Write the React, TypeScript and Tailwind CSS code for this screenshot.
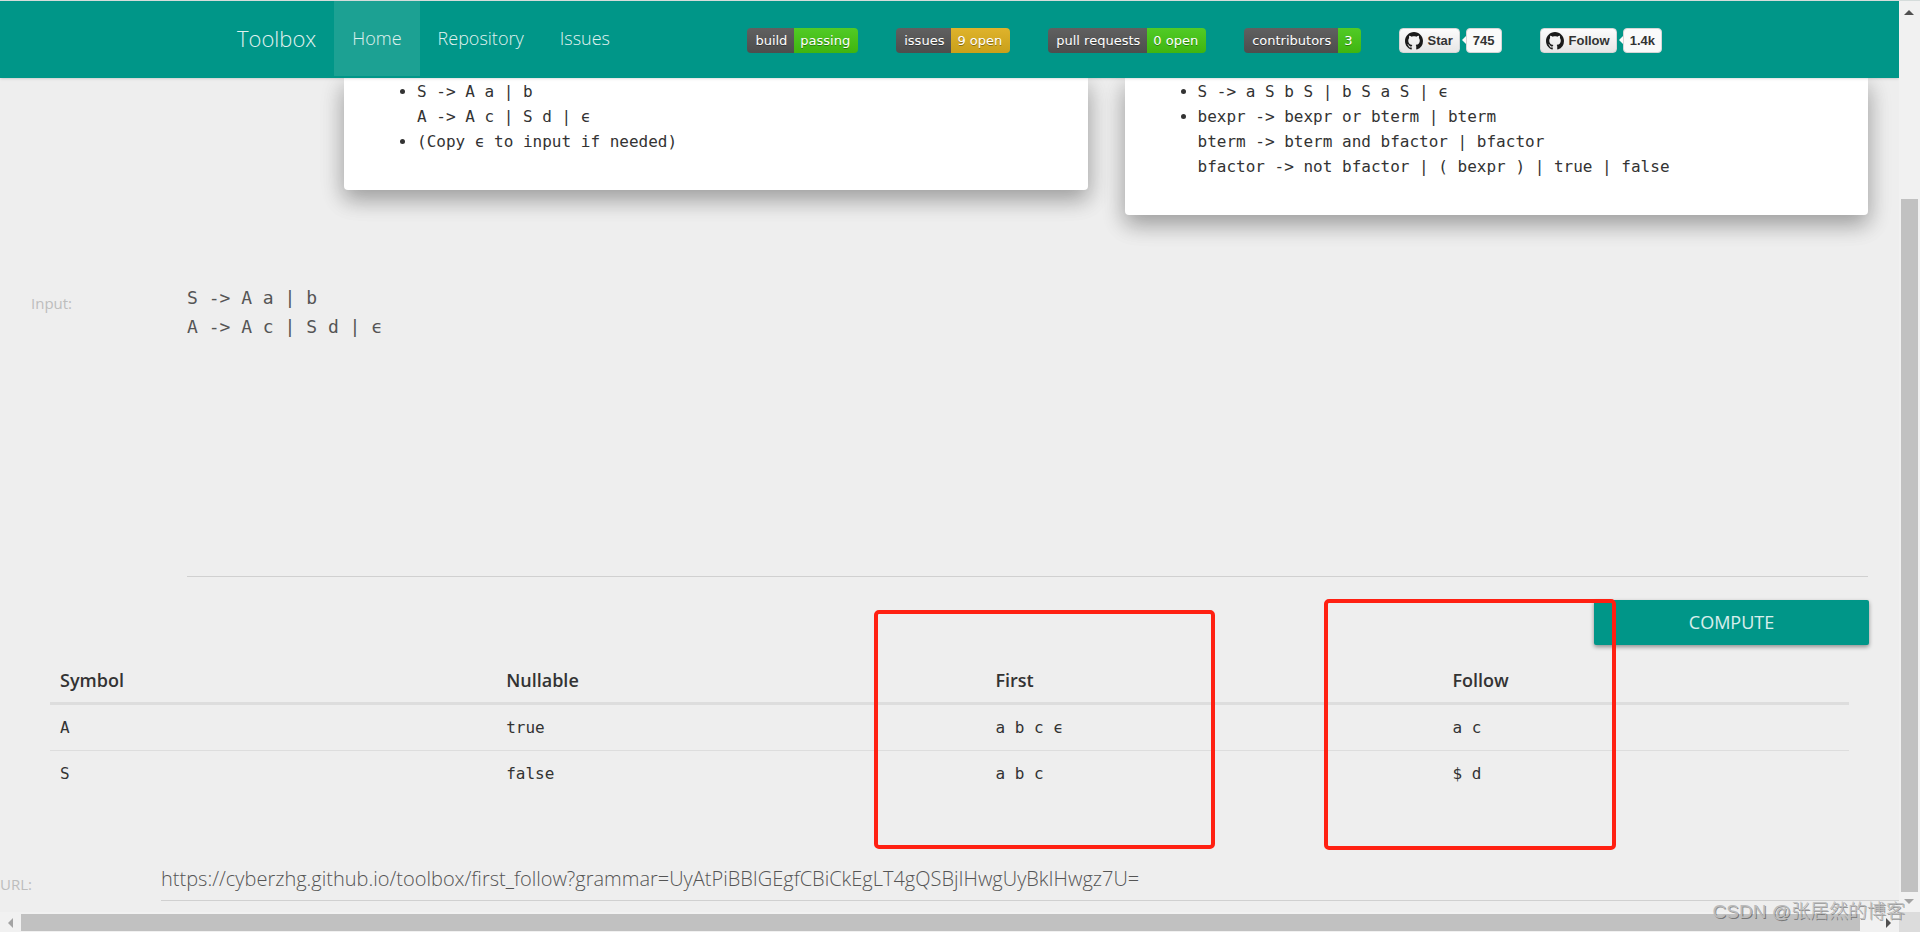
const navLinks = [
  { label: "Home", active: true },
  { label: "Repository", active: false },
  { label: "Issues", active: false },
];

const badges = [
  { label: "build", value: "passing", color: "from-[#51cb25] to-[#3fb50f]" },
  { label: "issues", value: "9 open", color: "from-[#dfb32b] to-[#c9a01a]" },
  { label: "pull requests", value: "0 open", color: "from-[#51cb25] to-[#3fb50f]" },
  { label: "contributors", value: "3", color: "from-[#51cb25] to-[#3fb50f]" },
];

const socials = [
  { label: "Star", count: "745" },
  { label: "Follow", count: "1.4k" },
];

const rows = [
  { symbol: "A", nullable: "true", first: "a b c ϵ", follow: "a c" },
  { symbol: "S", nullable: "false", first: "a b c", follow: "$ d" },
];

const mono = "font-['DejaVu_Sans_Mono',monospace]";

function Navbar() {
  return (
    <header className="relative z-10 h-[78px] border-t border-[#d5dcdb] bg-[#009688] shadow-sm">
      <div className="mx-auto flex max-w-[1425px] items-start justify-between">
        <nav className="flex items-center font-light text-[#e0f2f0]">
          <a href="#" className="mr-[18px] text-[22px] leading-[75px]">Toolbox</a>
          {navLinks.map((link) => (
            <a
              key={link.label}
              href="#"
              className={`px-[18px] text-[18px] leading-[75px] ${link.active ? "bg-[#1ca193]" : ""}`}
            >
              {link.label}
            </a>
          ))}
        </nav>
        <div className="flex gap-[38px] pt-[27px]">
          {badges.map((badge) => (
            <Badge key={badge.label} {...badge} />
          ))}
          {socials.map((social) => (
            <SocialBadge key={social.label} {...social} />
          ))}
        </div>
      </div>
    </header>
  );
}

function Badge({ label, value, color }: { label: string; value: string; color: string }) {
  return (
    <a
      href="#"
      className="flex h-[25px] overflow-hidden rounded font-['DejaVu_Sans',sans-serif] text-[13px] leading-[25px] whitespace-nowrap text-white [text-shadow:0_1px_0_rgba(1,1,1,0.35)]"
    >
      <span className="bg-linear-to-b from-[#606060] to-[#4d4d4d] pr-[7px] pl-2">{label}</span>
      <span className={`bg-linear-to-b pr-2 pl-1.5 ${color}`}>{value}</span>
    </a>
  );
}

function GithubMark() {
  return (
    <svg className="size-[18px] text-[#1b1b1b]" viewBox="0 0 16 16" fill="currentColor">
      <path d="M8 0C3.58 0 0 3.58 0 8c0 3.54 2.29 6.53 5.47 7.59.4.07.55-.17.55-.38 0-.19-.01-.82-.01-1.49-2.01.37-2.53-.49-2.69-.94-.09-.23-.48-.94-.82-1.13-.28-.15-.68-.52-.01-.53.63-.01 1.08.58 1.23.82.72 1.21 1.87.87 2.33.66.07-.52.28-.87.51-1.07-1.78-.2-3.64-.89-3.64-3.95 0-.87.31-1.59.82-2.15-.08-.2-.36-1.02.08-2.12 0 0 .67-.21 2.2.82.64-.18 1.32-.27 2-.27s1.36.09 2 .27c1.53-1.04 2.2-.82 2.2-.82.44 1.1.16 1.92.08 2.12.51.56.82 1.27.82 2.15 0 3.07-1.87 3.75-3.65 3.95.29.25.54.73.54 1.48 0 1.07-.01 1.93-.01 2.2 0 .21.15.46.55.38A8.01 8.01 0 0 0 16 8c0-4.42-3.58-8-8-8z" />
    </svg>
  );
}

function SocialBadge({ label, count }: { label: string; count: string }) {
  return (
    <a
      href="#"
      className="flex h-[25px] font-['Liberation_Sans',sans-serif] text-[13px] leading-[23px] font-bold whitespace-nowrap text-[#333]"
    >
      <span className="flex items-center gap-[5px] rounded-sm border border-[#d5d5d5] bg-linear-to-b from-[#fcfcfc] to-[#e6e6e6] pr-1.5 pl-[5px]">
        <GithubMark />
        {label}
      </span>
      <svg className="mt-2 h-2 w-1.5" viewBox="0 0 6 8">
        <path d="M6 0v8L2 4z" fill="#fafafa" />
      </svg>
      <span className="rounded-sm border border-[#d5d5d5] bg-[#fafafa] px-1.5">{count}</span>
    </a>
  );
}

function ExampleCard({ items }: { items: string[] }) {
  return (
    <div className="rounded-b-sm bg-white pt-px pb-9 pl-[73px] shadow-[0_10px_21px_rgba(0,0,0,0.2),0_8px_25px_rgba(0,0,0,0.19)]">
      <ul className={`list-disc text-[16px] leading-[25px] whitespace-pre ${mono}`}>
        {items.map((item) => (
          <li key={item}>{item}</li>
        ))}
      </ul>
    </div>
  );
}

function Arrow({ d, color }: { d: string; color: string }) {
  return (
    <svg className="size-5 shrink-0" viewBox="0 0 20 20">
      <path d={d} fill={color} />
    </svg>
  );
}

export default function App() {
  return (
    <div className="relative grid h-screen grid-cols-[minmax(0,1fr)_21px] grid-rows-[minmax(0,1fr)_20px] overflow-hidden bg-[#eee] font-['Open_Sans',sans-serif] text-[#333]">
      <div className="overflow-hidden">
        <Navbar />

        <section className="grid grid-cols-2 items-start gap-[37px] pr-[31px] pl-[344px]">
          <ExampleCard items={["S -> A a | b\nA -> A c | S d | ϵ", "(Copy ϵ to input if needed)"]} />
          <ExampleCard
            items={[
              "S -> a S b S | b S a S | ϵ",
              "bexpr -> bexpr or bterm | bterm\nbterm -> bterm and bfactor | bfactor\nbfactor -> not bfactor | ( bexpr ) | true | false",
            ]}
          />
        </section>

        <section className="mt-[68px] flex items-start pr-[31px]">
          <label htmlFor="grammar" className="w-[187px] shrink-0 pt-[10px] pl-[31px] text-[15px] leading-5 text-[#bdbdbd]">
            Input:
          </label>
          <textarea
            id="grammar"
            className={`h-[294px] flex-1 resize-none border-b border-[#d0d0d0] text-[18px] leading-[29px] text-[#555] outline-none ${mono}`}
            defaultValue={"S -> A a | b\nA -> A c | S d | ϵ"}
          />
        </section>

        <div className="mt-[23px] flex justify-end pr-[30px]">
          <button className="h-[45px] w-[275px] rounded-xs bg-[#009688] text-[18px] text-white/85 shadow-[0_2px_4px_rgba(0,0,0,0.4)]">
            COMPUTE
          </button>
        </div>

        <div className="mt-[13px] px-[50px]">
          <table className="w-full table-fixed border-separate border-spacing-0 text-left">
            <thead className="text-[18px] leading-6">
              <tr className="*:h-[47px] *:border-b-3 *:border-[#ddd] *:pl-[10px] *:font-semibold">
                <th className="w-[24.8%]">Symbol</th>
                <th className="w-[27.2%]">Nullable</th>
                <th className="w-[25.4%]">First</th>
                <th>Follow</th>
              </tr>
            </thead>
            <tbody className={`text-[16px] ${mono}`}>
              {rows.map((row) => (
                <tr
                  key={row.symbol}
                  className="*:h-[46px] *:border-b *:border-[#ddd] *:pl-[10px] last:*:border-transparent"
                >
                  <td>{row.symbol}</td>
                  <td>{row.nullable}</td>
                  <td>{row.first}</td>
                  <td>{row.follow}</td>
                </tr>
              ))}
            </tbody>
          </table>
        </div>

        <div className="mt-[60px] flex">
          <label htmlFor="url" className="w-[161px] shrink-0 pt-[17px] text-[15px] leading-5 text-[#bdbdbd]">
            URL:
          </label>
          <input
            id="url"
            readOnly
            className="h-11 flex-1 border-b border-[#d0d0d0] text-[20px] font-light text-[#555] outline-none"
            value="https://cyberzhg.github.io/toolbox/first_follow?grammar=UyAtPiBBIGEgfCBiCkEgLT4gQSBjIHwgUyBkIHwgz7U="
          />
        </div>
      </div>

      {/* vertical scrollbar */}
      <div className="flex flex-col border-t border-[#d5dcdb] bg-[#f1f1f1] px-0.5">
        <Arrow d="M3 14h10L8 9z" color="#505050" />
        <div className="flex-[178]" />
        <div className="flex-[692] bg-[#c1c1c1]" />
        <Arrow d="M3 7h10l-5 5z" color="#a3a3a3" />
      </div>

      {/* horizontal scrollbar */}
      <div className="flex bg-[#f1f1f1] pt-0.5 pb-px">
        <Arrow d="M13 4v10L8 9z" color="#a3a3a3" />
        <div className="ml-px flex-[1839] bg-[#c1c1c1]" />
        <div className="flex-[19]" />
        <Arrow d="M7 4v10l5-5z" color="#505050" />
      </div>
      <div className="bg-[#dcdcdc]" />

      <div className="absolute top-[610px] left-[874px] h-[239px] w-[341px] rounded-[5px] border-4 border-[#ff2012]" />
      <div className="absolute top-[599px] left-[1324px] h-[251px] w-[292px] rounded-[5px] border-4 border-[#ff2012]" />

      <p className="absolute right-[15px] bottom-[8px] font-['Liberation_Sans','Noto_Sans_CJK_SC',sans-serif] text-[19px] leading-6 font-light text-[#bbb] [text-shadow:1px_1px_0_rgba(0,0,0,0.4)]">
        CSDN @张居然的博客
      </p>
    </div>
  );
}
